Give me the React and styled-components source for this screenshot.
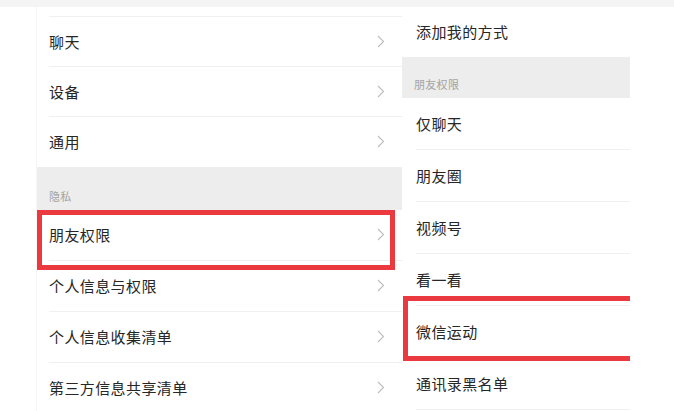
import React from "react";
import styled, { createGlobalStyle } from "styled-components";

const Global = createGlobalStyle`
  html, body {
    margin: 0;
    padding: 0;
    background: #ffffff;
  }
  body {
    font-family: "Noto Sans CJK SC", "Noto Sans", sans-serif;
    color: #222;
  }
`;

const Page = styled.div`
  width: 674px;
  height: 411px;
  overflow: hidden;
  background: #fff;
  display: flex;
  flex-direction: column;
`;

const TopStrip = styled.div`
  height: 7px;
  flex: none;
  background: #f4f4f4;
`;

const Columns = styled.div`
  display: flex;
  flex: 1;
  padding-left: 36px;
`;

const Panel = styled.div`
  width: ${(p) => p.width}px;
  flex: none;
  display: flex;
  flex-direction: column;
  overflow: hidden;
  background: #fff;
  border-left: ${(p) => (p.edge ? "1px solid #f6f6f6" : "none")};
`;

const TopCut = styled.div`
  height: 9px;
  flex: none;
  margin-left: 12px;
  border-bottom: 1px solid #f0f0f0;
`;

const Row = styled.div`
  position: relative;
  height: ${(p) => p.h || 50}px;
  flex: none;
  box-sizing: border-box;
  display: flex;
  align-items: center;
  justify-content: space-between;
  padding: 0 17px 2px ${(p) => p.inset || 12}px;
  font-size: 15px;
  letter-spacing: 0.4px;
  color: #262626;
  &::after {
    content: "";
    display: ${(p) => (p.last ? "none" : "block")};
    position: absolute;
    left: ${(p) => p.inset || 12}px;
    right: 0;
    bottom: 0;
    height: 1px;
    background: #f0f0f0;
  }
`;

const Section = styled.div`
  height: ${(p) => p.h}px;
  flex: none;
  background: #ededed;
  display: flex;
  align-items: flex-end;
  padding: 0 0 6px 12px;
  box-sizing: border-box;
  font-size: 11px;
  color: #a3a3a3;
  letter-spacing: 0.3px;
`;

const Highlight = styled.div`
  position: absolute;
  top: ${(p) => p.t}px;
  bottom: ${(p) => p.b}px;
  left: ${(p) => p.l}px;
  right: ${(p) => p.r}px;
  border: 5px solid #ea3a3f;
  pointer-events: none;
  z-index: 2;
`;

const Chevron = () => (
  <svg width="8" height="13" viewBox="0 0 8 13">
    <polyline
      points="1,1 6.5,6.5 1,12"
      fill="none"
      stroke="#bdbdbd"
      strokeWidth="1.1"
    />
  </svg>
);

const leftTop = ["聊天", "设备", "通用"];
const leftBottom = ["朋友权限", "个人信息与权限", "个人信息收集清单", "第三方信息共享清单"];
const rightBottom = ["仅聊天", "朋友圈", "视频号", "看一看", "微信运动", "通讯录黑名单"];

export default function App() {
  return (
    <Page>
      <Global />
      <TopStrip />
      <Columns>
        <Panel width={365} edge>
          <TopCut />
          {leftTop.map((t, i) => (
            <Row key={t} last={i === leftTop.length - 1}>
              <span>{t}</span>
              <Chevron />
            </Row>
          ))}
          <Section h={43}>隐私</Section>
          {leftBottom.map((t) => (
            <Row key={t} h={51}>
              <span>{t}</span>
              <Chevron />
              {t === "朋友权限" && <Highlight t={0} b={-9} l={0} r={7} />}
            </Row>
          ))}
        </Panel>
        <Panel width={228}>
          <Row last inset={14}>
            <span>添加我的方式</span>
          </Row>
          <Section h={41}>朋友权限</Section>
          {rightBottom.map((t) => (
            <Row key={t} h={52} inset={14}>
              <span>{t}</span>
              {t === "微信运动" && <Highlight t={-10} b={-3} l={1} r={-12} />}
            </Row>
          ))}
        </Panel>
      </Columns>
    </Page>
  );
}
